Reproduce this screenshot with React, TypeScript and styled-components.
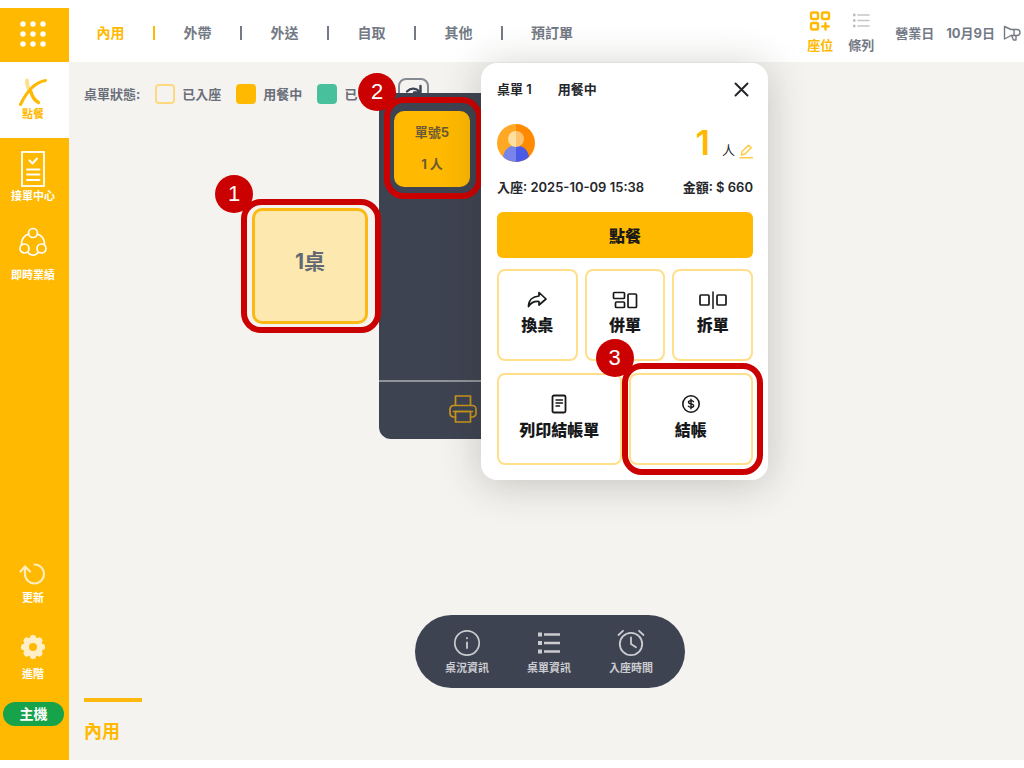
import React from 'react';
import styled, { createGlobalStyle, css } from 'styled-components';

const yellow = '#ffb900';
const slate = '#3e4352';
const grey = '#636974';
const red = '#cb0000';

const GlobalStyle = createGlobalStyle`
  *, *::before, *::after { box-sizing: border-box; }
  body {
    margin: 0;
    background: #fff;
    font-family: Inter, "Noto Sans CJK TC", sans-serif;
    color: ${grey};
  }
  button {
    font: inherit;
    color: inherit;
    margin: 0;
    padding: 0;
    border: 0;
    background: none;
    cursor: pointer;
  }
  svg { display: block; flex: none; }
  h2, p { margin: 0; }
`;

const Page = styled.div`
  display: grid;
  grid-template-columns: 69px minmax(0, 1fr);
  min-height: 100vh;
  padding: 8px 0;
`;

const Sidebar = styled.aside`
  display: flex;
  flex-direction: column;
  background: ${yellow};
  color: #fff;
`;

const MenuButton = styled.button`
  display: flex;
  align-items: center;
  justify-content: center;
  height: 54px;
  padding: 0 3px 3px 0;
`;

const SideNav = styled.nav`
  display: flex;
  flex-direction: column;
  flex: 1;
`;

const SideButton = styled.button<{ $active?: boolean; $height: number; $gap: number }>`
  display: flex;
  flex-direction: column;
  align-items: center;
  justify-content: center;
  gap: ${p => p.$gap}px;
  height: ${p => p.$height}px;
  padding-right: 3px;
  font-size: 11px;
  line-height: 16px;
  font-weight: 700;
  ${p => p.$active && css`
    background: #fff;
    color: ${yellow};
  `}
`;

const Spacer = styled.div`
  flex: 1;
`;

const HostBadge = styled.button`
  height: 24px;
  margin: 8px 5px 34px 3px;
  border-radius: 12px;
  background: #17a349;
  font-size: 14px;
  line-height: 24px;
  font-weight: 700;
`;

const Content = styled.div`
  display: flex;
  flex-direction: column;
`;

const Header = styled.header`
  display: flex;
  align-items: center;
  height: 54px;
  padding: 0 3px 4px 27px;
  background: #fff;
`;

const Tabs = styled.nav`
  display: flex;
  align-items: center;
  gap: 28px;
`;

const Tab = styled.button<{ $active?: boolean }>`
  min-width: 29px;
  font-size: 14px;
  line-height: 20px;
  font-weight: 700;
  white-space: nowrap;
  color: ${p => (p.$active ? yellow : '#747a85')};
`;

const Divider = styled.span<{ $active?: boolean }>`
  width: 2px;
  height: 14px;
  background: ${p => (p.$active ? yellow : '#747a85')};
`;

const HeaderTools = styled.div`
  display: flex;
  align-items: center;
  gap: 15px;
  margin-left: auto;
  font-size: 13px;
  line-height: 20px;
  font-weight: 700;
`;

const ViewButton = styled.button<{ $active?: boolean }>`
  display: flex;
  flex-direction: column;
  align-items: center;
  gap: 4px;
  width: 26px;
  color: ${p => (p.$active ? yellow : '#747a85')};
`;

const DateInfo = styled.div`
  display: flex;
  align-items: center;
  margin-left: 6px;
  gap: 12px;
  white-space: nowrap;
  color: #747a85;
`;

const DateValue = styled.span`
  margin-right: -4px;
`;

const Floor = styled.main`
  position: relative;
  display: flex;
  flex: 1;
  flex-direction: column;
  padding: 16px 15px;
  background: #f5f3f0;
`;

const Legend = styled.div`
  display: flex;
  align-items: center;
  gap: 15px;
  height: 31px;
  font-size: 13px;
  line-height: 20px;
  font-weight: 700;
  color: #6a6f7a;
`;

const LegendItem = styled.span`
  display: flex;
  align-items: center;
  gap: 7px;
  min-width: 66px;
`;

const Swatch = styled.span<{ $fill: string; $line: string }>`
  width: 20px;
  height: 20px;
  border: 2px solid ${p => p.$line};
  border-radius: 4px;
  background: ${p => p.$fill};
`;

const RefreshButton = styled.button`
  display: flex;
  align-items: center;
  justify-content: center;
  width: 31px;
  height: 31px;
  border: 2px solid #858a92;
  border-radius: 8px;
  color: ${slate};
`;

const Table = styled.button`
  position: absolute;
  left: 183px;
  top: 146px;
  width: 116px;
  height: 116px;
  padding-bottom: 8px;
  border: 3px solid #fdb913;
  border-radius: 10px;
  background: #fde8b0;
  font-size: 21px;
  line-height: 28px;
  font-weight: 700;
`;

const OrderPanel = styled.section`
  position: absolute;
  left: 310px;
  top: 31px;
  display: flex;
  flex-direction: column;
  width: 168px;
  height: 346px;
  border-radius: 0 0 12px 12px;
  background: ${slate};
`;

const OrderList = styled.div`
  flex: 1;
  padding: 18px 15px;
`;

const OrderTile = styled.button`
  position: relative;
  display: flex;
  flex-direction: column;
  align-items: center;
  justify-content: center;
  gap: 12px;
  width: 76px;
  height: 76px;
  padding-bottom: 2px;
  border-radius: 10px;
  background: ${yellow};
  font-size: 13px;
  line-height: 20px;
  font-weight: 700;
  color: #6b5a35;
`;

const OrderFooter = styled.div`
  display: flex;
  align-items: center;
  justify-content: center;
  height: 59px;
  padding-bottom: 3px;
  border-top: 2px solid #8f949b;
  color: #cc961a;
`;

const Detail = styled.section`
  position: absolute;
  left: 412px;
  top: 1px;
  display: flex;
  flex-direction: column;
  width: 287px;
  padding: 15px 15px 15px 16px;
  border-radius: 16px;
  background: #fff;
  box-shadow: 0 4px 40px rgba(40, 40, 30, 0.24);
  color: #25272b;
`;

const DetailHead = styled.div`
  display: flex;
  align-items: center;
  gap: 26px;
  height: 22px;
  font-size: 13px;
  line-height: 20px;
  font-weight: 600;
`;

const DetailTitle = styled.h2`
  font: inherit;
`;

const CloseButton = styled.button`
  margin-left: auto;
  margin-right: 4px;
`;

const GuestRow = styled.div`
  display: flex;
  align-items: center;
  height: 38px;
  margin-top: 24px;
`;

const GuestCount = styled.div`
  display: flex;
  align-items: baseline;
  gap: 12px;
  margin-left: auto;
  font-size: 13px;
  font-weight: 400;
`;

const GuestNumber = styled.strong`
  font-size: 34px;
  line-height: 38px;
  font-weight: 600;
  color: ${yellow};
`;

const EditButton = styled.button`
  align-self: flex-end;
  margin: 0 0 3px -8px;
`;

const InfoRow = styled.div`
  display: flex;
  justify-content: space-between;
  margin-top: 15px;
  font-size: 13px;
  line-height: 20px;
  font-weight: 600;
  white-space: nowrap;
`;

const OrderButton = styled.button`
  height: 46px;
  margin: 15px 0 11px;
  border-radius: 6px;
  background: ${yellow};
  font-size: 16px;
  font-weight: 800;
  color: #17181a;
`;

const ActionRow = styled.div`
  display: flex;
  gap: 7px;
  & + & { margin-top: 12px; }
`;

const Action = styled.button`
  position: relative;
  display: flex;
  flex: 1;
  flex-direction: column;
  align-items: center;
  justify-content: center;
  gap: 4px;
  height: 92px;
  padding-bottom: 2px;
  border: 2px solid #ffdf8a;
  border-radius: 8px;
  font-size: 16px;
  line-height: 24px;
  font-weight: 800;
  color: #17181a;
`;

const Ring = styled.span<{ $inset: string }>`
  position: absolute;
  inset: ${p => p.$inset};
  border: 6px solid ${red};
  border-radius: 20px;
  pointer-events: none;
`;

const StepBadge = styled.span`
  position: absolute;
  left: -32px;
  top: -30px;
  width: 38px;
  height: 38px;
  border-radius: 50%;
  background: ${red};
  font-family: "Liberation Sans", sans-serif;
  font-size: 22px;
  line-height: 38px;
  font-weight: 400;
  text-align: center;
  color: #fff;
`;

const DockLayer = styled.div`
  position: absolute;
  left: 7px;
  right: 0;
  bottom: 72px;
  display: flex;
  justify-content: center;
  pointer-events: none;
`;

const Dock = styled.div`
  display: flex;
  align-items: center;
  gap: 38px;
  height: 73px;
  padding: 1px 32px 0 30px;
  border-radius: 37px;
  background: ${slate};
  pointer-events: auto;
`;

const DockButton = styled.button`
  display: flex;
  flex-direction: column;
  align-items: center;
  gap: 3px;
  width: 44px;
  font-size: 11px;
  line-height: 16px;
  font-weight: 700;
  white-space: nowrap;
  color: #cbccd0;
`;

const AreaTab = styled.button`
  width: 58px;
  margin-top: auto;
  padding-top: 18px;
  border-top: 4px solid #fdb90c;
  font-size: 18px;
  line-height: 24px;
  font-weight: 700;
  text-align: left;
  color: ${yellow};
`;

type IconProps = { w: number; h: number; sw?: number; children: React.ReactNode };

const Icon = ({ w, h, sw = 2, children }: IconProps) => (
  <svg
    width={w}
    height={h}
    viewBox={`0 0 ${w} ${h}`}
    fill="none"
    stroke="currentColor"
    strokeWidth={sw}
    strokeLinecap="round"
    strokeLinejoin="round"
    aria-hidden="true"
  >
    {children}
  </svg>
);

const Callout = ({ step, inset }: { step: number; inset: string }) => (
  <Ring $inset={inset}>
    <StepBadge>{step}</StepBadge>
  </Ring>
);

const DotsIcon = () => (
  <Icon w={26} h={26}>
    {[3, 13, 23].map(y =>
      [3, 13, 23].map(x => <circle key={`${x}-${y}`} cx={x} cy={y} r="2.7" fill="currentColor" stroke="none" />),
    )}
  </Icon>
);

const UtensilsIcon = () => (
  <Icon w={28} h={28} sw={3}>
    <path d="M8 2.500C8 7 8.500 9.500 11 12.500" stroke="#ffdf91" strokeWidth="4" />
    <path d="M1.500 26.500C7 15 14 4.500 26.500 2.500" />
    <path d="M12 14C13.500 19.500 15.500 22.500 19.500 24.500" strokeWidth="3.4" />
  </Icon>
);

const ChecklistIcon = () => (
  <Icon w={24} h={36} sw={1.8}>
    <rect x="1" y="1" width="22" height="34" strokeLinejoin="miter" />
    <path d="M8.5 9.5l3 3 4.5-5" strokeWidth="2" />
    <path d="M6 18.5h12.5M6 23.5h12.5M6 29h12.5" />
  </Icon>
);

const PeopleIcon = () => (
  <Icon w={28} h={30} sw={1.7}>
    <circle cx="14" cy="6" r="4.5" />
    <circle cx="5.5" cy="21.5" r="4.5" />
    <circle cx="22.5" cy="21.5" r="4.5" />
    <path d="M9.5 7C4.500 9 2.200 13 2.600 17.800M18.500 7C23.500 9 25.800 13 25.400 17.800M8.500 25.300C12 29.200 16 29.200 19.500 25.300" />
  </Icon>
);

const ReloadIcon = () => (
  <Icon w={28} h={24} sw={2.2}>
    <g opacity="0.75">
      <path d="M15.500 2.500a9.500 9.500 0 1 1-9.500 9.500V5" />
      <path d="M1.500 9.500L6 4.500l5 5" />
    </g>
  </Icon>
);

const GearIcon = () => (
  <Icon w={24} h={24}>
    <g fill="#ffefc8" stroke="none">
      {[0, 45, 90, 135].map(a => (
        <rect key={a} x="9" y="0" width="6" height="24" rx="2.5" transform={`rotate(${a} 12 12)`} />
      ))}
      <circle cx="12" cy="12" r="10" />
      <circle cx="12" cy="12" r="4" fill={yellow} />
    </g>
  </Icon>
);

const SeatsIcon = () => (
  <Icon w={22} h={20} sw={2.4}>
    <rect x="2" y="1.5" width="7" height="6.5" rx="1.5" />
    <rect x="13" y="1.5" width="7" height="6.5" rx="1.5" />
    <rect x="2" y="12" width="7" height="6.5" rx="1.5" />
    <path d="M16.5 12.2v6.4M13.3 15.4h6.4" />
  </Icon>
);

const RowsIcon = () => (
  <Icon w={18} h={20} sw={1.6}>
    <path d="M6 4H17M6 9.500H17M6 15H17" stroke="#c3c5c9" />
    <path d="M1 4h2.500M1 9.500h2.500M1 15h2.500" stroke="#b9bcc1" strokeWidth="2.400" strokeLinecap="butt" />
  </Icon>
);

const MegaphoneIcon = () => (
  <Icon w={18} h={18} sw={1.4}>
    <path d="M1.500 2.500L8 5.500h6a3 3 0 0 1 0 6H8L1.500 15z" />
    <path d="M11 5.500v6M8.500 11.500l2 4.500h2.500v-4.500" />
  </Icon>
);

const TurnIcon = () => (
  <Icon w={21} h={21} sw={2.4}>
    <path d="M4 8.500C8 4.500 13 4.800 17 9" />
    <path d="M17.500 3v6.500H11" />
  </Icon>
);

const PrinterIcon = () => (
  <Icon w={28} h={28} sw={1.7}>
    <path d="M6.500 10V1h15v9" />
    <path d="M6.500 22H4.500a3.500 3.500 0 0 1-3.500-3.500V14a3.500 3.500 0 0 1 3.500-3.500h19A3.500 3.500 0 0 1 27 14v4.500a3.500 3.500 0 0 1-3.500 3.500h-2" />
    <rect x="6.500" y="16.500" width="15" height="10.500" />
    <path d="M4.500 16.500h19" />
  </Icon>
);

const CloseIcon = () => (
  <Icon w={15} h={15} sw={2}>
    <path d="M1.500 1.500l12 12M13.500 1.500l-12 12" />
  </Icon>
);

const Avatar = () => (
  <svg width="38" height="38" viewBox="0 0 38 38" role="img" aria-label="顧客">
    <defs>
      <clipPath id="face">
        <circle cx="19" cy="19" r="19" />
      </clipPath>
    </defs>
    <g clipPath="url(#face)">
      <rect width="19" height="38" fill="#ffa823" />
      <rect x="19" width="19" height="38" fill="#ff8a00" />
      <path d="M19 21.500c-8 0-12.500 5-13 12V38h13z" fill="#7984eb" />
      <path d="M19 21.500c8 0 12.500 5 13 12V38H19z" fill="#4b5be6" />
      <path d="M19 7a8 8 0 0 0 0 16z" fill="#ffdfa0" />
      <path d="M19 7a8 8 0 0 1 0 16z" fill="#ffc26c" />
    </g>
  </svg>
);

const EditIcon = () => (
  <Icon w={14} h={15} sw={1.5}>
    <g stroke="#ffcb45">
      <path d="M2.500 11l.5-3.500L9.500 1.200l2.800 2.600L6 10z" />
      <path d="M1 13.800h12.500" />
    </g>
  </Icon>
);

const ShareIcon = () => (
  <Icon w={20} h={18} sw={1.7}>
    <path d="M12 1.500l7 6.500-7 6v-3.500c-5-.500-8 1-10.500 5C1.500 9.500 5.500 5.500 12 5z" />
  </Icon>
);

const MergeIcon = () => (
  <Icon w={26} h={18} sw={1.7}>
    <rect x="1.500" y="1.500" width="11" height="6" rx="1" />
    <rect x="3.500" y="11" width="9" height="5.500" rx="1" />
    <rect x="16" y="3" width="8.500" height="13.500" rx="1" />
  </Icon>
);

const SplitIcon = () => (
  <Icon w={28} h={18} sw={1.7}>
    <rect x="1" y="4" width="9" height="10" rx="1" />
    <rect x="18" y="4" width="9" height="10" rx="1" />
    <path d="M14 1v16.500" strokeWidth="1.500" />
  </Icon>
);

const BillIcon = () => (
  <Icon w={16} h={20} sw={1.8}>
    <rect x="1.500" y="1.500" width="13" height="17" rx="1.500" />
    <path d="M5 6h6.500M5 9h6.500M5 12h3.500" strokeWidth="1.400" />
  </Icon>
);

const PayIcon = () => (
  <Icon w={20} h={20} sw={1.6}>
    <circle cx="10" cy="10" r="8.200" />
    <path d="M12.500 7.700c-.6-.8-1.500-1.100-2.500-1.100-3.400 0-3.300 2.900 0 3.300 3.500.5 3.600 3.500 0 3.500-1.200 0-2.100-.4-2.700-1.200M10 5.200v9.600" strokeWidth="1.400" />
  </Icon>
);

const InfoIcon = () => (
  <Icon w={28} h={28} sw={1.7}>
    <circle cx="14" cy="14" r="12.200" />
    <path d="M14 13.500v5.500M14 9v.3" strokeWidth="1.800" />
  </Icon>
);

const ListIcon = () => (
  <Icon w={28} h={28} sw={2.6}>
    <path d="M9 5.500h16M9 14h16M9 22.500h16" strokeLinecap="butt" />
    <path d="M3 5.500h4M3 14h4M3 22.500h4" strokeWidth="4" strokeLinecap="butt" />
  </Icon>
);

const AlarmIcon = () => (
  <Icon w={28} h={28} sw={1.8}>
    <circle cx="14" cy="15" r="11.200" />
    <path d="M14 8.500V15l5 3.300M1.500 6L6 1.800M26.500 6L22 1.800" />
  </Icon>
);

const serviceTabs = ['內用', '外帶', '外送', '自取', '其他', '預訂單'];

export default function App() {
  return (
    <>
      <GlobalStyle />
      <Page>
        <Sidebar>
          <MenuButton aria-label="選單">
            <DotsIcon />
          </MenuButton>
          <SideNav>
            <SideButton $active $height={76} $gap={0}>
              <UtensilsIcon />
              點餐
            </SideButton>
            <SideButton $height={78} $gap={1}>
              <ChecklistIcon />
              接單中心
            </SideButton>
            <SideButton $height={78} $gap={10}>
              <PeopleIcon />
              即時業績
            </SideButton>
            <Spacer />
            <SideButton $height={76} $gap={4}>
              <ReloadIcon />
              更新
            </SideButton>
            <SideButton $height={72} $gap={7}>
              <GearIcon />
              進階
            </SideButton>
            <HostBadge>主機</HostBadge>
          </SideNav>
        </Sidebar>

        <Content>
          <Header>
            <Tabs>
              {serviceTabs.map((name, i) => (
                <React.Fragment key={name}>
                  {i > 0 && <Divider $active={i === 1} />}
                  <Tab $active={i === 0}>{name}</Tab>
                </React.Fragment>
              ))}
            </Tabs>
            <HeaderTools>
              <ViewButton $active>
                <SeatsIcon />
                座位
              </ViewButton>
              <ViewButton>
                <RowsIcon />
                條列
              </ViewButton>
              <DateInfo>
                <span>營業日</span>
                <DateValue>10月9日</DateValue>
                <MegaphoneIcon />
              </DateInfo>
            </HeaderTools>
          </Header>

          <Floor>
            <Legend>
              <span>桌單狀態:</span>
              <LegendItem>
                <Swatch $fill="transparent" $line="#ffd980" />
                已入座
              </LegendItem>
              <LegendItem>
                <Swatch $fill={yellow} $line={yellow} />
                用餐中
              </LegendItem>
              <LegendItem>
                <Swatch $fill="#48c09c" $line="#48c09c" />
                已
              </LegendItem>
              <RefreshButton aria-label="重新整理">
                <TurnIcon />
              </RefreshButton>
            </Legend>

            <OrderPanel>
              <OrderList>
                <OrderTile>
                  <span>單號5</span>
                  <span>1 人</span>
                  <Callout step={2} inset="-14px -12px -12px -10px" />
                </OrderTile>
              </OrderList>
              <OrderFooter>
                <button aria-label="列印">
                  <PrinterIcon />
                </button>
              </OrderFooter>
            </OrderPanel>

            <Detail>
              <DetailHead>
                <DetailTitle>桌單 1</DetailTitle>
                <span>用餐中</span>
                <CloseButton aria-label="關閉">
                  <CloseIcon />
                </CloseButton>
              </DetailHead>
              <GuestRow>
                <Avatar />
                <GuestCount>
                  <GuestNumber>1</GuestNumber>
                  <span>人</span>
                  <EditButton aria-label="編輯人數">
                    <EditIcon />
                  </EditButton>
                </GuestCount>
              </GuestRow>
              <InfoRow>
                <span>入座: 2025-10-09 15:38</span>
                <span>金額: $ 660</span>
              </InfoRow>
              <OrderButton>點餐</OrderButton>
              <ActionRow>
                <Action>
                  <ShareIcon />
                  換桌
                </Action>
                <Action>
                  <MergeIcon />
                  併單
                </Action>
                <Action>
                  <SplitIcon />
                  拆單
                </Action>
              </ActionRow>
              <ActionRow>
                <Action>
                  <BillIcon />
                  列印結帳單
                </Action>
                <Action>
                  <PayIcon />
                  結帳
                  <Callout step={3} inset="-12px -12px -12px -9px" />
                </Action>
              </ActionRow>
            </Detail>

            <Table>
              1桌
              <Callout step={1} inset="-12px -16px -12px -14px" />
            </Table>

            <AreaTab>內用</AreaTab>

            <DockLayer>
              <Dock>
                <DockButton>
                  <InfoIcon />
                  桌況資訊
                </DockButton>
                <DockButton>
                  <ListIcon />
                  桌單資訊
                </DockButton>
                <DockButton>
                  <AlarmIcon />
                  入座時間
                </DockButton>
              </Dock>
            </DockLayer>
          </Floor>
        </Content>
      </Page>
    </>
  );
}
